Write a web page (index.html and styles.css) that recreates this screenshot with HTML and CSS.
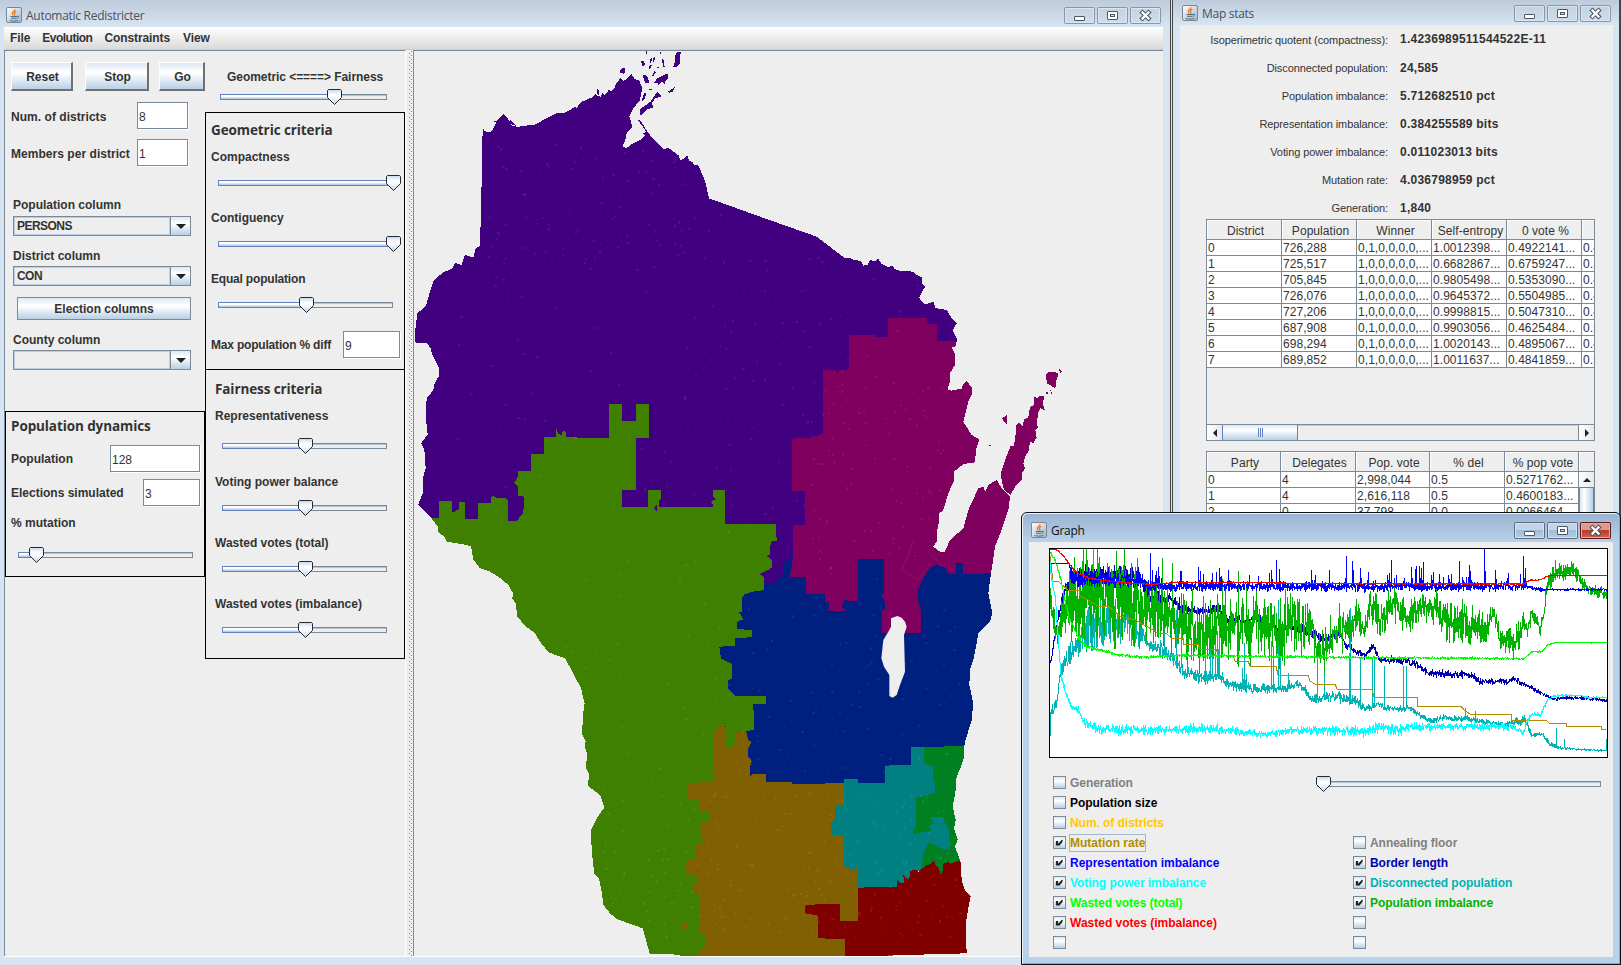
FILE: index.html
```html
<!DOCTYPE html>
<html lang="en">
<head>
<meta charset="utf-8">
<title>Automatic Redistricter</title>
<link rel="stylesheet" href="styles.css">
</head>
<body>
<svg class="defs" width="0" height="0">
  <defs>
    <linearGradient id="chip" x1="0" y1="0" x2="1" y2="1"><stop offset="0" stop-color="#fff"/><stop offset="1" stop-color="#9fb3c4"/></linearGradient>
    <linearGradient id="knob" x1="0" y1="0" x2="0" y2="1"><stop offset="0" stop-color="#c4d8ec"/><stop offset=".35" stop-color="#fff"/><stop offset=".6" stop-color="#f2f6fb"/><stop offset="1" stop-color="#b8cfe5"/></linearGradient>
    <symbol id="java" viewBox="0 0 16 16">
      <rect x=".5" y=".5" width="15" height="15" rx="1.5" fill="url(#chip)" stroke="#7e868e"/>
      <path d="M8.8 2.2c.8 2-3 2.6-2.5 4.400.2.8 1 1.300 1 2M10.300 4.300c-2 1-2.500 1.600-1.600 2.900.4.600.2 1.300-.2 1.600" fill="none" stroke="#e87722" stroke-width="1.200"/>
      <path d="M4.500 9.500h6.500M5 11.300h5.500M3.500 13.500c2.500.8 6.500.8 8.800 0M11 9.200c2-.6 2.200 1.400 0 2" fill="none" stroke="#44708f" stroke-width="1"/>
    </symbol>
    <symbol id="min" viewBox="0 0 31 17"><rect x="10.500" y="9.500" width="10" height="4" rx=".5" fill="#fff" stroke="#4c5566"/></symbol>
    <symbol id="max" viewBox="0 0 31 17"><rect x="10.500" y="4.500" width="10" height="8" rx=".5" fill="#fff" stroke="#4c5566"/><rect x="13.500" y="7.500" width="4" height="2" fill="#d5e1ee" stroke="#4c5566"/></symbol>
    <symbol id="close" viewBox="0 0 31 17"><path d="M12.500 5.500l6 6M18.500 5.500l-6 6" stroke="#4c5566" stroke-width="4.400" stroke-linecap="square"/><path d="M12.500 5.500l6 6M18.500 5.500l-6 6" stroke="#fff" stroke-width="2.300" stroke-linecap="square"/></symbol>
    <symbol id="thumb" viewBox="0 0 15 16"><path d="M1.500.5h12l1 1v7l-7 7-7-7v-7z" fill="url(#knob)" stroke="#222a35"/></symbol>
    <symbol id="tick" viewBox="0 0 13 13"><path d="M3.500 5v4.500M4.500 5v4.500M5 9l4.500-5M5.500 9.500L9.500 5" stroke="#222" stroke-width="1.300" fill="none"/></symbol>
  </defs>
</svg>

<main class="desktop">
  <section class="window main-window">
    <header class="titlebar">
      <svg class="app-icon"><use href="#java"/></svg><h1>Automatic Redistricter</h1>
      <div class="controls"><svg><use href="#min"/></svg><svg><use href="#max"/></svg><svg><use href="#close"/></svg></div>
    </header>
    <nav class="menubar"><span>File</span><span class="evo">Evolution</span><span>Constraints</span><span class="view">View</span></nav>
    <div class="split">
      <div class="side">
        <div class="col">
          <div class="buttons"><button class="raised reset">Reset</button><button class="raised stop">Stop</button><button class="raised go">Go</button></div>
          <div class="field first"><label>Num. of districts</label><span class="input w51">8</span></div>
          <div class="field second"><label>Members per district</label><span class="input w51">1</span></div>
          <div class="lbl ind mt31">Population column</div>
          <div class="combo mt3"><span class="sel">PERSONS</span><span class="arrow"><i></i></span></div>
          <div class="lbl ind mt12">District column</div>
          <div class="combo mt2"><span class="sel">CON</span><span class="arrow"><i></i></span></div>
          <button class="flat">Election columns</button>
          <div class="lbl ind mt12">County column</div>
          <div class="combo mt2"><span class="sel"></span><span class="arrow"><i></i></span></div>
          <div class="box dynamics">
            <h2>Population dynamics</h2>
            <div class="field pop"><label>Population</label><span class="input w90">128</span></div>
            <div class="field elec"><label>Elections simulated</label><span class="input w57">3</span></div>
            <div class="lbl mt9">% mutation</div>
            <div class="slider wide mt16"><div class="track"><b style="width:19px"></b></div><svg class="thumb" style="left:11px"><use href="#thumb"/></svg></div>
          </div>
        </div>
        <div class="col">
          <div class="lbl balance">Geometric &lt;====&gt; Fairness</div>
          <div class="slider top mt4"><div class="track"><b style="width:115px"></b></div><svg class="thumb" style="left:107px"><use href="#thumb"/></svg></div>
          <div class="box geometric">
            <h2>Geometric criteria</h2>
            <div class="lbl mt9">Compactness</div>
            <div class="slider wide mt10"><div class="track"><b style="width:175px"></b></div><svg class="thumb" style="left:168px"><use href="#thumb"/></svg></div>
            <div class="lbl mt19">Contiguency</div>
            <div class="slider wide mt10"><div class="track"><b style="width:175px"></b></div><svg class="thumb" style="left:168px"><use href="#thumb"/></svg></div>
            <div class="lbl tight mt19">Equal population</div>
            <div class="slider wide mt10"><div class="track"><b style="width:89px"></b></div><svg class="thumb" style="left:81px"><use href="#thumb"/></svg></div>
            <div class="field maxpop"><label class="tight">Max population % diff</label><span class="input w57">9</span></div>
          </div>
          <div class="box fairness">
            <h2>Fairness criteria</h2>
            <div class="lbl mt9">Representativeness</div>
            <div class="slider mid mt14"><div class="track"><b style="width:84px"></b></div><svg class="thumb" style="left:76px"><use href="#thumb"/></svg></div>
            <div class="lbl mt20">Voting power balance</div>
            <div class="slider mid mt10"><div class="track"><b style="width:84px"></b></div><svg class="thumb" style="left:76px"><use href="#thumb"/></svg></div>
            <div class="lbl mt19">Wasted votes (total)</div>
            <div class="slider mid mt10"><div class="track"><b style="width:84px"></b></div><svg class="thumb" style="left:76px"><use href="#thumb"/></svg></div>
            <div class="lbl mt19">Wasted votes (imbalance)</div>
            <div class="slider mid mt10"><div class="track"><b style="width:84px"></b></div><svg class="thumb" style="left:76px"><use href="#thumb"/></svg></div>
          </div>
        </div>
      </div>
      <div class="divider"></div>
      <div class="map">
        <svg viewBox="12 33 2247 2715" width="749" height="905">
          <g id="land" shape-rendering="crispEdges">
            <path fill="#400080" d="M218 265L225 274 243 277 252 262 262 240 280 221 292 234 305 256 322 261 345 257 372 255 400 240 420 230 440 220 462 219 480 210 495 200 500 203 515 185 535 177 550 170 556 160 562 168 572 170 578 158 584 165 592 158 596 149 604 155 615 143 617 133 632 113 640 122 648 118 655 110 665 103 675 118 688 122 697 145 690 180 670 205 658 228 667 260 650 280 648 295 638 318 648 326 665 312 690 300 705 286 697 280 712 276 740 308 762 328 775 323 790 335 800 342 805 345 812 360 822 356 832 347 838 362 848 366 852 376 865 376 880 410 888 435 897 475 1050 530 1220 590 1305 655 1320 655 1335 660 1352 663 1360 677 1372 675 1380 660 1392 664 1405 657 1415 672 1435 682 1448 677 1455 688 1470 692 1510 695 1520 705 1535 712 1535 728 1545 740 1527 773 1535 785 1548 794 1560 788 1572 786 1575 804 1600 808 1612 812 1622 830 1640 850 1628 870 1642 898 1640 905 1500 1000 1300 1700 1050 1700 500 1500 200 1470 63 1433 25 1393 38 1360 40 1310 47 1285 43 1230 33 1210 53 1183 47 1130 50 1075 70 1050 72 1035 88 1005 88 985 65 940 63 925 50 910 20 910 15 905 16 870 22 820 48 798 57 765 65 740 72 720 100 697 128 685 135 668 155 675 165 645 190 653 197 625 210 617 214 470Z"/>
            <path fill="#400080" d="M797 38l15-2-3 34-10 12-9-2 5-16zM732 130l8-14 15-8 20-8v15l-9 10-2 8-6-8-8 4-4 7-4-8zM698 107l8-4 8 10 4 16-12-1zM628 92l14-10 5 8-4 12-12-4zM694 62l6 1 5 8-5 9-5-6zM716 78l9-4-1 9-7 7zM722 55h5l-5 14-4-2zM731 50h4l-2 14-4 2zM740 80h6v5h-6zM755 56h5l4 24-4 2zM726 106l8-13 3 5-7 10zM715 146h11v4h-9zM696 178l7-18h5l-3 15-7 8zM774 155l21-14-8 15-10 2zM708 34h4v9h-4zM750 36h3v7h-3zM690 226v-18l16-12 16-11 20-31 12 15-18 6-10 14 5 15-20 3-17 18zM250 243l14 6-16 18 20-12 2-10zM300 240l18 18-22-8zM683 239l8 2 24 38 20 26-25-28zM560 146l6 3 2 20-7-8z"/>
            <path fill="#002080" d="M1000 1640L1062 1633 1095 1633 1098 1620 1120 1607 1120 1567 1138 1567 1150 1540 1350 1545 1600 1560 1650 1562 1735 1590 1743 1598 1735 1660 1747 1720 1740 1745 1705 1780 1698 1820 1690 1860 1680 1890 1678 1935 1690 1990 1685 2040 1665 2105 1663 2118 1663 2130 1500 2260 900 2240 900 1800Z"/>
            <path fill="#800060" d="M1435 833L1550 833 1553 852 1582 852 1580 902 1640 902 1638 918 1625 923 1635 940 1635 975 1620 1000 1620 1025 1612 1048 1625 1052 1655 1046 1660 1032 1670 1023 1687 1045 1685 1065 1675 1085 1660 1145 1685 1185 1708 1198 1698 1230 1695 1267 1660 1272 1632 1295 1633 1320 1615 1360 1600 1410 1588 1420 1586 1450 1582 1470 1580 1505 1570 1520 1590 1535 1605 1535 1620 1500 1660 1465 1675 1410 1705 1345 1720 1340 1725 1355 1735 1335 1760 1320 1775 1345 1800 1370 1795 1410 1775 1470 1755 1520 1748 1570 1743 1600 1660 1602 1660 1568 1638 1568 1638 1602 1612 1600 1608 1585 1580 1573 1560 1585 1542 1610 1522 1655 1525 1680 1532 1710 1534 1780 1417 1778 1417 1710 1425 1708 1423 1680 1412 1668 1423 1660 1423 1557 1345 1557 1345 1684 1315 1682 1305 1678 1295 1700 1308 1712 1255 1712 1258 1690 1245 1685 1245 1663 1187 1662 1187 1611 1140 1610 1148 1560 1148 1455 1185 1454 1185 1353 1145 1352 1145 1196 1200 1194 1238 1182 1239 990 1277 990 1282 1002 1288 990 1317 988 1317 886 1395 886 1397 892 1435 892Z"/>
            <g transform="translate(870 420)" fill="#800060">
              <path d="M902 880L915 840 932 797 940 800 946 775 948 735 956 728 968 738 972 718 985 712 990 682 1003 673 1003 650 1012 655 1018 647 1033 650 1028 668 1035 692 1022 684 1014 700 1010 735 1016 740 1006 750 1010 772 1000 790 990 785 985 815 975 830 970 850 975 865 965 880 965 900 945 920 932 945 912 930 905 900Z"/>
              <path d="M1040 578l20-3 14 4-1 12-5 12-4 22-10-8-12-6-4-16zM1078 568l7 6-5 7zM906 715l14-9v26l-11-12zM1038 638l5-2 2 6-5 2zM1050 628l8 14-3 2zM1060 592h8v30h-4zM868 795h4v3h-4z"/>
            </g>
            <g transform="translate(750 1560)">
              <path fill="#806000" d="M150 490L258 513 265 540 275 545 265 565 265 590 275 603 270 620 270 650 278 643 317 642 317 667 395 667 398 673 552 669 700 800 700 1187 60 1187 50 660Z"/>
              <path fill="#008020" d="M752 562L913 558 913 590 905 615 890 650 886 700 878 740 887 780 882 805 893 838 885 860 900 900 902 915 850 960 780 940 755 830Z"/>
              <path fill="#008080" d="M552 657L593 657 593 668 674 668 674 617 752 614 752 562 792 562 792 612 820 617 818 660 826 668 826 697 808 702 806 709 768 710 768 795 760 810 760 822 785 818 812 812 808 798 822 790 810 770 850 770 852 785 865 800 870 860 865 867 840 865 820 852 803 845 798 870 788 878 787 923 750 960 712 990 593 990 593 922 575 930 552 918 552 850 548 825 514 825 514 790 525 780 527 740 552 735Z"/>
              <path fill="#800000" d="M593 983L712 980 712 960 720 968 732 968 730 945 738 955 748 958 750 935 765 928 775 935 800 915 812 912 822 900 828 918 838 928 840 945 850 930 848 912 865 906 870 912 895 903 902 905 905 960 915 990 932 1008 925 1045 917 1090 920 1180 555 1190 555 1137 475 1135 475 1067 435 1060 435 1037 480 1032 540 1033 540 1084 593 1084Z"/>
            </g>
            <path fill="#408000" d="M63 1433L87 1433 87 1383 127 1383 127 1415 133 1417 147 1405 148 1386 165 1386 165 1438 204 1438 204 1389 243 1389 245 1365 258 1373 285 1373 295 1382 295 1443 318 1444 340 1420 342 1370 323 1367 323 1340 313 1328 323 1310 323 1292 363 1292 363 1242 403 1242 403 1192 438 1192 438 1163 445 1182 456 1185 458 1173 467 1175 467 1192 597 1194 597 1092 637 1092 637 1143 677 1143 677 1092 717 1092 717 1195 677 1195 677 1350 636 1350 636 1401 715 1401 715 1351 754 1351 754 1375 747 1382 747 1402 908 1402 908 1392 902 1388 908 1382 920 1378 908 1370 908 1351 946 1351 946 1453 1098 1453 1100 1503 1082 1505 1080 1545 1070 1548 1085 1560 1086 1583 1050 1603 1062 1612 1062 1650 1030 1655 1003 1663 995 1675 995 1715 988 1717 1000 1738 982 1745 982 1767 1025 1770 1025 1792 974 1794 974 1818 928 1820 933 1855 967 1872 967 1917 954 1920 955 1945 975 1967 1067 1968 1067 1992 1028 1993 1032 2020 1033 2070 1008 2073 978 2074 975 2100 972 2123 949 2123 949 2057 924 2057 924 2074 911 2074 911 2227 831 2228 831 2277 870 2278 870 2312 897 2314 897 2346 870 2350 878 2408 858 2408 858 2458 831 2460 826 2500 863 2510 863 2530 851 2532 851 2560 870 2562 870 2682 890 2685 888 2718 877 2720 877 2732 860 2735 860 2744 720 2743 705 2690 698 2665 620 2637 600 2620 580 2595 575 2555 567 2515 553 2503 545 2430 543 2370 560 2335 583 2302 570 2265 533 2237 538 2205 527 2180 532 2145 524 2120 527 2105 517 2085 518 2030 524 1990 513 1945 490 1900 465 1855 415 1837 390 1805 375 1780 345 1757 322 1730 317 1690 307 1675 309 1660 295 1635 265 1610 240 1595 210 1585 190 1558 183 1520 170 1515 110 1505 103 1490 86 1478 83 1460Z"/>
            <path fill="#806000" d="M810 2662l12-14h9v19h-17z"/>
            <path fill="#400080" d="M732 1406l8-12v18z"/>
          </g>
          <path fill="#eee" d="M1443 1735L1462 1728 1475 1733 1485 1745 1490 1760 1482 1785 1485 1895 1470 1935 1460 1965 1448 1973 1438 1968 1438 1905 1422 1880 1414 1855 1420 1800 1435 1775 1443 1760Z"/>
          <path d="M1510 1505l-35 85 50 30 40-55M1560 1540l40 40M1360 1890l35-30" fill="none" stroke="#fff" stroke-opacity=".12" stroke-width="2"/>
          <path id="specks" fill="none" stroke="#fff" stroke-opacity=".13" stroke-width="3"/>
        </svg>
      </div>
    </div>
  </section>

  <section class="window stats-window">
    <header class="titlebar">
      <svg class="app-icon"><use href="#java"/></svg><h1>Map stats</h1>
      <div class="controls"><svg><use href="#min"/></svg><svg><use href="#max"/></svg><svg><use href="#close"/></svg></div>
    </header>
    <div class="stats-body">
      <dl class="stats">
        <dt>Isoperimetric quotent (compactness):</dt><dd>1.4236989511544522E-11</dd>
        <dt>Disconnected population:</dt><dd>24,585</dd>
        <dt>Population imbalance:</dt><dd>5.712682510 pct</dd>
        <dt>Representation imbalance:</dt><dd>0.384255589 bits</dd>
        <dt>Voting power imbalance:</dt><dd>0.011023013 bits</dd>
        <dt>Mutation rate:</dt><dd>4.036798959 pct</dd>
        <dt>Generation:</dt><dd>1,840</dd>
      </dl>
      <div class="table districts">
        <div class="row head"><span>District</span><span>Population</span><span>Winner</span><span>Self-entropy</span><span>0 vote %</span><span></span></div>
        <div class="row"><span>0</span><span>726,288</span><span>0,1,0,0,0,0,...</span><span>1.0012398...</span><span>0.4922141...</span><span>0.4</span></div>
        <div class="row"><span>1</span><span>725,517</span><span>1,0,0,0,0,0,...</span><span>0.6682867...</span><span>0.6759247...</span><span>0.3</span></div>
        <div class="row"><span>2</span><span>705,845</span><span>1,0,0,0,0,0,...</span><span>0.9805498...</span><span>0.5353090...</span><span>0.4</span></div>
        <div class="row"><span>3</span><span>726,076</span><span>1,0,0,0,0,0,...</span><span>0.9645372...</span><span>0.5504985...</span><span>0.4</span></div>
        <div class="row"><span>4</span><span>727,206</span><span>1,0,0,0,0,0,...</span><span>0.9998815...</span><span>0.5047310...</span><span>0.4</span></div>
        <div class="row"><span>5</span><span>687,908</span><span>0,1,0,0,0,0,...</span><span>0.9903056...</span><span>0.4625484...</span><span>0.5</span></div>
        <div class="row"><span>6</span><span>698,294</span><span>0,1,0,0,0,0,...</span><span>1.0020143...</span><span>0.4895067...</span><span>0.4</span></div>
        <div class="row"><span>7</span><span>689,852</span><span>0,1,0,0,0,0,...</span><span>1.0011637...</span><span>0.4841859...</span><span>0.5</span></div>
        <div class="hscroll"><span class="sbtn"><i class="left"></i></span><span class="hthumb"><i></i><i></i><i></i></span><span class="htrack"></span><span class="sbtn"><i class="arrow-right"></i></span></div>
      </div>
      <div class="table parties">
        <div class="row head"><span>Party</span><span>Delegates</span><span>Pop. vote</span><span>% del</span><span>% pop vote</span><span></span></div>
        <div class="party-body">
          <div>
            <div class="row"><span>0</span><span>4</span><span>2,998,044</span><span>0.5</span><span>0.5271762...</span></div>
            <div class="row"><span>1</span><span>4</span><span>2,616,118</span><span>0.5</span><span>0.4600183...</span></div>
            <div class="row"><span>2</span><span>0</span><span>37,798</span><span>0.0</span><span>0.0066464...</span></div>
          </div>
          <div class="vscroll"><span class="sbtn"><i class="up"></i></span><span class="vthumb"></span></div>
        </div>
      </div>
    </div>
  </section>

  <section class="window graph-window">
    <header class="titlebar">
      <svg class="app-icon"><use href="#java"/></svg><h1>Graph</h1>
      <div class="controls"><svg><use href="#min"/></svg><svg><use href="#max"/></svg><svg class="red"><use href="#close"/></svg></div>
    </header>
    <div class="graph-body">
      <svg id="plot" class="plot" viewBox="1 1 557 208" shape-rendering="crispEdges"></svg>
      <div class="legend">
        <div class="checks">
          <div class="check c-gray"><i></i><span>Generation</span></div>
          <div class="check c-black"><i></i><span>Population size</span></div>
          <div class="check c-amber"><i></i><span>Num. of districts</span></div>
          <div class="check c-gold"><i><svg><use href="#tick"/></svg></i><span class="focus">Mutation rate</span></div>
          <div class="check c-blue"><i><svg><use href="#tick"/></svg></i><span>Representation imbalance</span></div>
          <div class="check c-cyan"><i><svg><use href="#tick"/></svg></i><span>Voting power imbalance</span></div>
          <div class="check c-lime"><i><svg><use href="#tick"/></svg></i><span>Wasted votes (total)</span></div>
          <div class="check c-red"><i><svg><use href="#tick"/></svg></i><span>Wasted votes (imbalance)</span></div>
          <div class="check"><i></i></div>
        </div>
        <div class="second">
          <div class="slider graph-slider"><div class="track"></div><svg class="thumb" style="left:-1px"><use href="#thumb"/></svg></div>
          <div class="second-checks">
            <div class="check c-gray"><i></i><span>Annealing floor</span></div>
            <div class="check c-navy"><i><svg><use href="#tick"/></svg></i><span>Border length</span></div>
            <div class="check c-teal"><i><svg><use href="#tick"/></svg></i><span>Disconnected population</span></div>
            <div class="check c-green"><i><svg><use href="#tick"/></svg></i><span>Population imbalance</span></div>
            <div class="check"><i></i></div>
            <div class="check"><i></i></div>
          </div>
        </div>
      </div>
    </div>
  </section>
</main>
<script src="plot.js"></script>
</body>
</html>
```
FILE: styles.css
```css
* { box-sizing: border-box; }
body { margin: 0; overflow: hidden; background: #d7e4f2; font: 12px/16px "Liberation Sans", Arial, sans-serif; color: #333; }
.defs { position: absolute; }
svg { display: block; }
.desktop { position: relative; width: 1621px; height: 965px; overflow: hidden; }
.window { position: absolute; }
h1, h2, dl, dd { margin: 0; }
button { font: bold 12px/16px "Liberation Sans", Arial, sans-serif; color: #333; padding: 0; border-radius: 0; }

.titlebar { display: flex; align-items: flex-start; }
.titlebar h1 { font: 12px/16px "Open Sans", "Noto Sans", sans-serif; letter-spacing: -.28px; color: #4a5058; margin-left: 4px; padding-top: 1px; flex: 1; white-space: nowrap; }
.app-icon { width: 16px; height: 16px; }
.controls { display: flex; gap: 2px; }
.controls svg { width: 31px; height: 17px; border-radius: 2px; background: linear-gradient(#c3d2e1, #cfdeed); box-shadow: inset 0 0 0 1px #8795a8, inset 0 0 0 2px #dbe6f1; }

.main-window { left: 0; top: 0; width: 1171px; height: 965px; background: #d7e4f2; border-right: 1px solid #444; padding: 0 7px 0 4px; }
.main-window .titlebar { height: 27px; margin: 0 -7px 0 -4px; padding: 7px 9px 0 6px; background: linear-gradient(#bdcbda, #d7e4f2); }
.menubar { display: flex; height: 23px; background: linear-gradient(#fff, #dadada); border-bottom: 1px solid #ccc; font-weight: bold; padding: 3px 6px; gap: 12px; }
.menubar span { letter-spacing: -.1px; }
.menubar .evo { letter-spacing: -.5px; }
.menubar .view { margin-left: 1px; }
.split { display: flex; height: 907px; background: #eee; border-bottom: 1px solid #fff; }
.side { display: flex; width: 402px; border-top: 1px solid #7a8a99; border-left: 1px solid #7a8a99; border-right: 1px solid #fff; }
.divider { width: 7px; background-color: #eee; background-image: linear-gradient(#7a8a99 1px, transparent 1px), linear-gradient(#7a8a99 1px, transparent 1px); background-size: 1px 4px; background-position: 3px 3px, 5px 5px; background-repeat: repeat-y; }
.map { width: 750px; border: 1px solid #7a8a99; border-width: 1px 0 0 1px; }

.col { width: 200px; }
.lbl, label, .menubar span { white-space: nowrap; }
.lbl { height: 16px; font-weight: bold; }
.tight { letter-spacing: -.19px; }
label { font-weight: bold; flex: 1; padding-top: 1px; }
.ind { margin-left: 8px; }
.mt2 { margin-top: 2px; } .mt3 { margin-top: 3px; } .mt4 { margin-top: 4px; } .mt9 { margin-top: 9px; } .mt10 { margin-top: 10px; }
.mt12 { margin-top: 12px; } .mt14 { margin-top: 14px; } .mt16 { margin-top: 16px; } .mt19 { margin-top: 19px; } .mt20 { margin-top: 20px; } .mt31 { margin-top: 31px; }
.buttons { display: flex; margin: 11px 0 0 6px; }
.raised, .flat { background: linear-gradient(#dde8f3 0, #fff 35%, #fff 40%, #b8cfe5 100%); }
.raised { height: 29px; border: solid; border-width: 1px 2px 2px 1px; border-color: #fff #707070 #707070 #fff; padding: 1px 0 0 2px; }
.reset { width: 62px; } .stop { width: 64px; margin-left: 12px; } .go { width: 46px; margin-left: 10px; }
.flat { display: block; width: 174px; height: 23px; margin: 11px 0 0 12px; border: 1px solid #7a8a99; }
.field { display: flex; align-items: center; height: 27px; padding-left: 6px; }
.field.first { margin-top: 11px; padding-right: 17px; }
.field.second { margin-top: 10px; padding-right: 17px; }
.field.first label, .field.second label { padding-top: 2px; letter-spacing: .04px; }
.input { height: 27px; background: #fff; border: 1px solid #7a8a99; box-shadow: 1px 1px 0 #fff; padding: 6px 1px; }
.w51 { width: 51px; } .w57 { width: 57px; } .w90 { width: 90px; }
.combo { display: flex; width: 178px; height: 20px; margin-left: 8px; border: 1px solid #7a8a99; font-weight: bold; }
.sel { flex: 1; border: 1px solid #b8cfe5; padding-left: 2px; letter-spacing: -.55px; }
.arrow { width: 20px; border-left: 1px solid #7a8a99; background: linear-gradient(#dde8f3, #fff 35%, #b8cfe5); display: flex; align-items: center; justify-content: center; }
.arrow i { border: 5px solid transparent; border-top-color: #222; border-bottom: 0; }
.box { border: 1px solid #000; }
.box h2 { font: bold 13.500px/20px "Open Sans", "Noto Sans", sans-serif; letter-spacing: -.1px; height: 20px; white-space: nowrap; }
.box.dynamics h2 { letter-spacing: -.1px; }
.dynamics { margin-top: 41px; height: 166px; width: 200px; padding: 4px 0 0 5px; }
.dynamics .field, .geometric .field { padding: 0 4px 0 0; }
.pop { margin-top: 9px; } .elec { margin-top: 7px; } .maxpop { margin-top: 18px; }
.balance { margin: 18px 0 0 22px; letter-spacing: -.05px; }
.geometric { margin-top: 7px; height: 258px; padding: 7px 0 0 5px; }
.fairness { margin-top: -1px; height: 290px; padding: 9px 0 0 9px; }
.slider { position: relative; height: 16px; padding-top: 5px; }
.track { height: 6px; border: 1px solid #7a8a99; box-shadow: inset 0 1px 0 #b5c5d6; }
.track b { display: block; height: 6px; margin: -1px; border: 1px solid #6382bf; background: linear-gradient(#fff 35%, #a9c1dc); }
.thumb { position: absolute; top: 0; width: 15px; height: 16px; }
.slider.wide { width: 175px; margin-left: 7px; }
.slider.top { width: 167px; margin-left: 15px; }
.slider.mid { width: 165px; margin-left: 7px; }

.stats-window { left: 1172px; top: 0; width: 449px; height: 965px; background: #d7e4f2; border: solid #444; border-width: 0 2px 0 1px; padding: 0 6px 0 7px; }
.stats-window .titlebar { height: 25px; margin: 0 -6px 0 -7px; padding: 5px 8px 0 9px; background: linear-gradient(#bdcbda, #d7e4f2); }
.stats-body { background: #eee; height: 932px; padding: 1px 18px 0 26px; }
.stats { display: grid; grid-template-columns: 182px 1fr; grid-auto-rows: 28px; column-gap: 12px; height: 193px; }
.stats dt { font-size: 11px; letter-spacing: -.09px; text-align: right; padding-top: 6px; white-space: nowrap; }
.stats dd { font-weight: bold; letter-spacing: .24px; padding-top: 6px; white-space: nowrap; }
.stats dd:first-of-type { padding-top: 5px; }
.table { width: 389px; border: 1px solid #7a8a99; overflow: hidden; }
.districts { height: 222px; display: flex; flex-direction: column; }
.row { display: grid; grid-template-columns: repeat(5, 75px) 12px; height: 16px; flex: none; background: #fff; line-height: 16px; }
.row span { border: solid #7a8a99; border-width: 0 1px 1px 0; padding-left: 1px; white-space: nowrap; overflow: hidden; letter-spacing: .06px; }
.row span:nth-child(6) { border-right: 0; }
.row.head { height: 20px; background: #eee; text-align: center; line-height: 22px; }
.row.head span { box-shadow: inset 1px 1px 0 #fff; padding-left: 3px; }
.hscroll { margin-top: auto; display: flex; height: 16px; border-top: 1px solid #7a8a99; }
.sbtn { width: 15px; height: 15px; flex: none; background: linear-gradient(90deg, #fff, #e5e9ee); display: flex; align-items: center; justify-content: center; }
.sbtn i { border: 4px solid transparent; }
.sbtn .left { border-right-color: #222; border-left: 0; }
.sbtn .arrow-right { border-left-color: #222; border-right: 0; }
.sbtn .up { border-bottom-color: #222; border-top: 0; }
.hthumb { width: 76px; border: 1px solid #6382bf; border-width: 0 1px; background: linear-gradient(#dde8f3, #fff 35%, #b8cfe5); display: flex; gap: 1px; align-items: center; justify-content: center; }
.hthumb i { width: 1px; height: 9px; background: #6382bf; }
.htrack { flex: 1; border-right: 1px solid #7a8a99; box-shadow: inset 0 1px 0 #b8cfe5; }
.parties { margin-top: 10px; height: 90px; }
.parties .row { grid-template-columns: 74px 75px 74px 75px 74px 15px; }
.party-body { display: flex; }
.party-body .row { grid-template-columns: 74px 75px 74px 75px 74px; }
.vscroll { width: 15px; display: flex; flex-direction: column; }
.vthumb { flex: 1; border: 1px solid #6382bf; background: linear-gradient(90deg, #dde8f3, #fff 35%, #b8cfe5); }

.graph-window { left: 1021px; top: 512px; width: 600px; height: 453px; border: 1px solid #111; border-radius: 6px 6px 0 0; background: #b9d1ea; box-shadow: inset 1px 1px 0 #e8f2fb, inset -1px -1px 0 #38c8e0; padding: 1px 7px 7px; }
.graph-window .titlebar { height: 28px; margin: 0 -6px; padding: 8px 8px 0 8px; background: linear-gradient(#99b4d1, #b9d1ea); border-radius: 5px 5px 0 0; }
.graph-window h1 { color: #111; }
.graph-window .controls svg { background: linear-gradient(#c2d4e7 45%, #a3bcd7 50%, #b9d1ea); box-shadow: inset 0 0 0 1px #5b6c85, inset 0 0 0 2px #d5e3f1; }
.graph-window .controls .red { background: linear-gradient(#d99a8f 45%, #bb3a26 50%, #cf6a55); box-shadow: inset 0 0 0 1px #5a1a1f, inset 0 0 0 2px #e3aca4; }
.graph-body { background: #eee; height: 415px; padding: 6px 5px 0 20px; }
.plot { background: #fff; border: 1px solid #000; width: 559px; height: 210px; }
.legend { display: flex; padding: 15px 0 0 4px; }
.checks { width: 263px; flex: none; }
.check { display: flex; align-items: center; height: 20px; gap: 4px; font-weight: bold; letter-spacing: -.05px; }
.check i { width: 13px; height: 13px; margin-bottom: 1px; border: 1px solid #7a8a99; background: linear-gradient(#dde8f3, #fff 35%, #b8cfe5); }
.check i svg { width: 13px; height: 13px; margin: -1px; }
.check span { line-height: 16px; margin-bottom: 1px; white-space: nowrap; }
.c-blue span, .c-red span { letter-spacing: 0; }
.check .focus { outline: 1px solid #a3b8cc; letter-spacing: 0; }
.graph-slider { width: 284px; margin: 3px 0 0 1px; }
.second-checks { margin: 41px 0 0 37px; }
.c-gray { color: #808080; } .c-black { color: #000; } .c-amber { color: #ffc800; } .c-gold { color: #b28c00; }
.c-blue { color: #00f; } .c-cyan { color: #0ff; } .c-lime { color: #0f0; } .c-red { color: #f00; }
.c-navy { color: #0000b2; } .c-teal { color: #00b2b2; } .c-green { color: #00b200; }
```
FILE: plot.js
```js
// Seeded generator keeps every run identical.
let seed = 7;
function rnd() {
  seed = (seed * 1664525 + 1013904223) % 4294967296;
  return seed / 4294967296;
}

// Each control point: [x, mean, noise amplitude, upward spike height, spike probability]
const series = [
  ["#0000b2", [[0,120,4],[3,105,4],[8,75,5],[12,55,6],[16,42,10],[22,30,12],[40,26,11],[90,28,11],[100,50,8],[120,50,8],[135,60,6],[150,64,5],[170,60,5],[180,73,5],[205,70,5],[230,80,5],[250,79,5],[275,91,5],[290,86,4],[298,98,4],[316,107,4],[324,98,4],[331,111,4],[358,112,4],[371,118,4],[379,125,4],[421,126,4],[431,133,3],[458,133,3],[464,130,3],[504,150,2],[531,149,2],[558,152,2]]],
  ["#00b2b2", [[0,200,4],[2,165,9],[8,152,9],[12,120,9],[20,108,14],[30,92,14],[40,75,28],[80,75,20],[90,84,14],[100,95,9,40,.03],[120,105,8,40,.03],[135,122,8,40,.03],[150,130,7,40,.03],[170,127,6,30,.02],[180,136,5,15,.03],[205,140,5,15,.02],[235,140,4,15,.02],[250,136,5,10,.02],[262,150,5,8,.02],[291,148,6],[306,152,5],[316,160,4],[330,155,4],[338,160,3],[361,160,3],[371,167,3],[383,173,3],[394,169,3],[418,170,3],[438,174,3],[458,176,3],[468,173,5],[476,172,5],[483,187,2],[493,185,2],[499,194,3],[508,199,1.500],[530,201,1],[558,202,1]]],
  ["#00b200", [[0,150,5],[1,40,20],[8,90,20],[15,60,28],[30,52,50],[90,52,50],[96,62,32,15,.03],[112,62,32,15,.03],[125,75,36,20,.03],[150,82,40,25,.03],[200,78,38,20,.03],[250,76,38,20,.03],[262,84,26],[272,106,18],[285,80,28,20,.03],[300,80,22,20,.03],[308,68,16],[314,83,16],[321,53,20],[331,73,18],[344,54,20,10,.02],[356,70,18],[371,55,17],[388,60,17],[398,75,23],[424,73,23],[438,80,16],[444,58,13],[451,90,12],[465,94,16],[471,88,18],[474,70,9],[478,82,8],[483,63,9],[488,75,6],[491,83,7],[496,57,10],[499,33,11],[508,22,12],[524,20,11],[534,37,8],[544,43,6],[558,45,6]]],
  ["#0000ff", [[0,15,0],[20,15,0],[22,30,9],[90,32,10],[100,38,5,14,.05],[200,38,5,12,.06],[330,38,5,14,.08],[470,38,5,16,.08],[478,38,4],[492,41,2],[500,41,.6],[558,41,1.200]]],
  ["#00ffff", [[0,2,1],[2,28,3],[6,48,3],[12,128,3],[16,143,4],[22,158,4],[29,162,4],[36,175,4],[50,180,6],[104,182,5],[137,181,5],[164,180,6],[197,184,4],[217,186,4],[237,182,4],[291,182,5],[319,183,6],[331,178,6],[350,182,6],[361,178,4],[464,178,4],[474,185,2],[478,173,2],[483,165,2],[491,167,2],[499,150,1.500],[508,147,1],[531,147,1],[538,149,1],[558,149,.6]]],
  ["#00ff00", [[0,2,1],[6,12,2],[12,32,2],[17,58,2],[21,72,2],[29,88,2],[37,98,2],[54,102,1.500],[67,106,1.500],[97,109,1.500],[121,107,1.200],[147,107,1.200],[299,109,1.200],[471,110,1.200],[474,111,.6],[483,103,.8],[493,103,.8],[499,96,.6],[508,94,.5],[558,94,.5]]],
  ["#ff0000", [[0,0,0],[7,1,.4],[14,7,.4],[22,18,.4],[29,25,.4],[41,30,.4],[64,33,.4],[104,36,.4],[127,34,.6],[224,34,.6],[237,35,.5],[474,35.500,.5],[481,31.500,.3],[491,31.500,.3],[499,27.500,.3],[508,27,.3],[558,27,.1]]]
];

// Isolated full-height peaks: colour -> [x, from, to]
const peaks = {
  "#00b2b2": [[44,0,90],[75,45,80],[115,72,105],[127,62,120],[132,80,120],[156,92,130],[161,95,130],[166,92,130],[195,95,137],[222,93,140],[224,98,140],[229,52,140],[231,100,140],[268,105,150],[275,118,150],[300,105,150],[301,60,150],[311,110,155],[323,110,155],[325,108,155],[335,118,158],[354,118,160],[357,118,160],[416,160,170],[426,163,172],[507,180,198],[515,191,200],[557,191,202]],
  "#0000ff": [[101,5,38],[227,12,38],[297,8,38],[303,13,38],[342,12,38],[374,14,38],[410,13,38],[435,0,38],[474,8,38]],
  "#00b200": [[37,0,60],[48,0,60],[75,0,60],[113,10,60],[123,15,60],[189,23,80],[275,100,126],[201,80,118],[142,90,112]]
};

const NS = "http://www.w3.org/2000/svg";
const plot = document.getElementById("plot");
function addPath(d, color) {
  const p = document.createElementNS(NS, "path");
  p.setAttribute("d", d);
  p.setAttribute("fill", "none");
  p.setAttribute("stroke", color);
  plot.appendChild(p);
}

series.forEach(([color, pts], n) => {
  let d = "", k = 0;
  for (let i = 0; i <= 558 * 3; i++) {
    const x = i / 3;
    while (k < pts.length - 2 && x > pts[k + 1][0]) k++;
    const a = pts[k], b = pts[k + 1];
    const t = Math.min(1, Math.max(0, (x - a[0]) / (b[0] - a[0])));
    let y = a[1] + (b[1] - a[1]) * t;
    const amp = a[2] + (b[2] - a[2]) * t;
    y += (rnd() + rnd() - 1) * amp * 1.150;
    if (a[4] && rnd() < a[4]) y -= a[3] * (0.4 + rnd());
    d += (d ? "L" : "M") + (Math.floor(x) + 0.5) + " " + (Math.round(Math.max(1, y)) + 0.5);
  }
  for (const [x, y1, y2] of peaks[color] || []) d += `M${x + 0.5} ${y1}V${y2}`;
  addPath(d, color);
  if (n === 2) {
    addPath("M1 8L4 33H9L12 36 19 42H30L31 48 39 52 49 58H59L71 68 86 72 97 78 104 82 109 85H117L122 90H134V96H149L151 101H167L169 107H184L186 113H199L201 118H227L229 127H259L261 133 266 136H286L288 141H323L325 149H368V158H412L415 162 421 166H462V172H497L500 175H517V178H552V181H557", "#b28c00");
  }
});

// Faint precinct marks scattered across the land area
const land = [...document.querySelectorAll("#land path")];
const shapes = [land[0], land[2], land[3], land[land.length - 3]];
const boxes = [[100,500,1050,1400],[900,650,1600,1500],[400,1300,1000,2300],[550,2200,900,2700],[1000,1700,1650,2200],[900,2250,1300,2700],[1300,2250,1650,2700],[1200,1000,1600,1650],[230,300,900,700]];
const svg = document.querySelector(".map svg");
let marks = "";
for (const [x1, y1, x2, y2] of boxes) {
  for (let i = 0; i < 95; i++) {
    const x = Math.round((x1 + rnd() * (x2 - x1)) / 3) * 3;
    const y = Math.round((y1 + rnd() * (y2 - y1)) / 3) * 3;
    const pt = svg.createSVGPoint();
    pt.x = x; pt.y = y;
    if (y < 2240 && !shapes.some(p => p.isPointInFill(pt))) continue;
    marks += `M${x} ${y}${rnd() < 0.6 ? "h" : "v"}${3 + Math.round(rnd() * 2) * 3}`;
  }
}
document.getElementById("specks").setAttribute("d", marks);
```
